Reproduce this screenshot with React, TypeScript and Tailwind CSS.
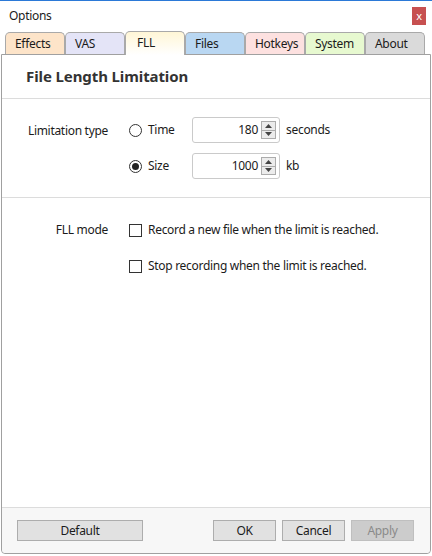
import {FC} from 'react';

const tabs = [
  {name: 'Effects', bg: 'bg-[#fde4c9]'},
  {name: 'VAS', bg: 'bg-[#e4e4f7]'},
  {name: 'FLL', bg: 'bg-gradient-to-b from-[#fff6d6] to-white', active: true},
  {name: 'Files', bg: 'bg-[#b9d7f2]'},
  {name: 'Hotkeys', bg: 'bg-[#fde1e0]'},
  {name: 'System', bg: 'bg-[#e7f9d0]'},
  {name: 'About', bg: 'bg-[#dadada]'},
];

const Radio: FC<{checked?: boolean; label: string}> = ({checked, label}) => (
  <div className="flex w-[63px] items-center gap-[6px]">
    <span className="flex h-[13px] w-[13px] items-center justify-center rounded-full border border-[#333]">
      {checked && <span className="h-[7px] w-[7px] rounded-full bg-[#222]" />}
    </span>
    <span>{label}</span>
  </div>
);

const Spin: FC<{value: string}> = ({value}) => (
  <div className="flex h-[26px] w-[88px] items-center justify-end rounded-[3px] border border-[#cacaca] bg-white pr-[3px]">
    <span className="mr-[3px]">{value}</span>
    <div className="flex h-[18px] w-[15px] flex-col border border-[#acacac] bg-[#ececec]">
      <div className="flex flex-1 items-center justify-center border-b border-[#acacac]">
        <svg width="7" height="4" viewBox="0 0 7 4">
          <path d="M0 4 L3.5 0 L7 4 Z" fill="#444" />
        </svg>
      </div>
      <div className="flex flex-1 items-center justify-center">
        <svg width="7" height="4" viewBox="0 0 7 4">
          <path d="M0 0 L3.5 4 L7 0 Z" fill="#444" />
        </svg>
      </div>
    </div>
  </div>
);

const Check: FC<{label: string}> = ({label}) => (
  <div className="flex items-center gap-[6px]">
    <span className="h-[13px] w-[13px] border border-[#333] bg-white" />
    <span>{label}</span>
  </div>
);

export default function App() {
  return (
    <div
      className="flex h-[556px] w-[432px] flex-col border-t border-[#2b79d7] bg-white text-[12px] tracking-[-0.3px] text-[#1b1b1b]"
      style={{fontFamily: '"Noto Sans", "Liberation Sans", sans-serif'}}>
      <div className="flex h-[30px] items-center justify-between pl-[9px] pr-[6px]">
        <span className="text-[12px]">Options</span>
        <div className="flex h-[18px] w-[14px] items-center justify-center bg-[#c75050] pb-[2px] text-[11px] leading-none text-white">
          x
        </div>
      </div>
      <div className="flex h-[23px] items-end pl-[5px]">
        {tabs.map((t) => (
          <div
            key={t.name}
            className={`${t.bg} flex w-[60px] items-center rounded-t-[5px] border border-[#a9a9a9] pl-[9px] ${
              t.active ? 'relative z-10 -mb-px h-[24px] border-b-0 pb-[2px] pl-[11px]' : 'h-[22px] border-b-0'
            }`}>
            {t.name}
          </div>
        ))}
      </div>
      <div className="mx-px mb-[2px] flex flex-1 flex-col rounded-b-[4px] border border-[#a0a0a0]">
        <div className="flex h-[44px] items-center border-b border-[#dcdcdc] pl-[24px]">
          <h2 className="text-[15px] font-bold tracking-[-0.1px] text-[#333]">File Length Limitation</h2>
        </div>
        <div className="flex border-b border-[#dcdcdc] py-[18px]">
          <div className="w-[106px] pt-[5px] text-right">Limitation type</div>
          <div className="ml-[21px] flex flex-col gap-[10px]">
            <div className="flex items-center">
              <Radio label="Time" />
              <Spin value="180" />
              <span className="ml-[6px]">seconds</span>
            </div>
            <div className="flex items-center">
              <Radio label="Size" checked />
              <Spin value="1000" />
              <span className="ml-[6px]">kb</span>
            </div>
          </div>
        </div>
        <div className="flex pt-[23px]">
          <div className="w-[106px] text-right">FLL mode</div>
          <div className="ml-[21px] flex flex-col gap-[18px]">
            <Check label="Record a new file when the limit is reached." />
            <Check label="Stop recording when the limit is reached." />
          </div>
        </div>
        <div className="flex-1" />
        <div className="flex h-[46px] items-center rounded-b-[4px] border-t border-[#dcdcdc] bg-[#f7f7f7] pl-[15px] pr-[16px]">
          <button className="h-[21px] w-[126px] border border-[#adadad] bg-[#e1e1e1]">Default</button>
          <div className="flex-1" />
          <div className="flex gap-[6px]">
            <button className="h-[21px] w-[63px] border border-[#adadad] bg-[#e1e1e1]">OK</button>
            <button className="h-[21px] w-[63px] border border-[#adadad] bg-[#e1e1e1]">Cancel</button>
            <button className="h-[21px] w-[63px] border border-[#bfbfbf] bg-[#cccccc] text-[#8a8a8a]">Apply</button>
          </div>
        </div>
      </div>
    </div>
  );
}
